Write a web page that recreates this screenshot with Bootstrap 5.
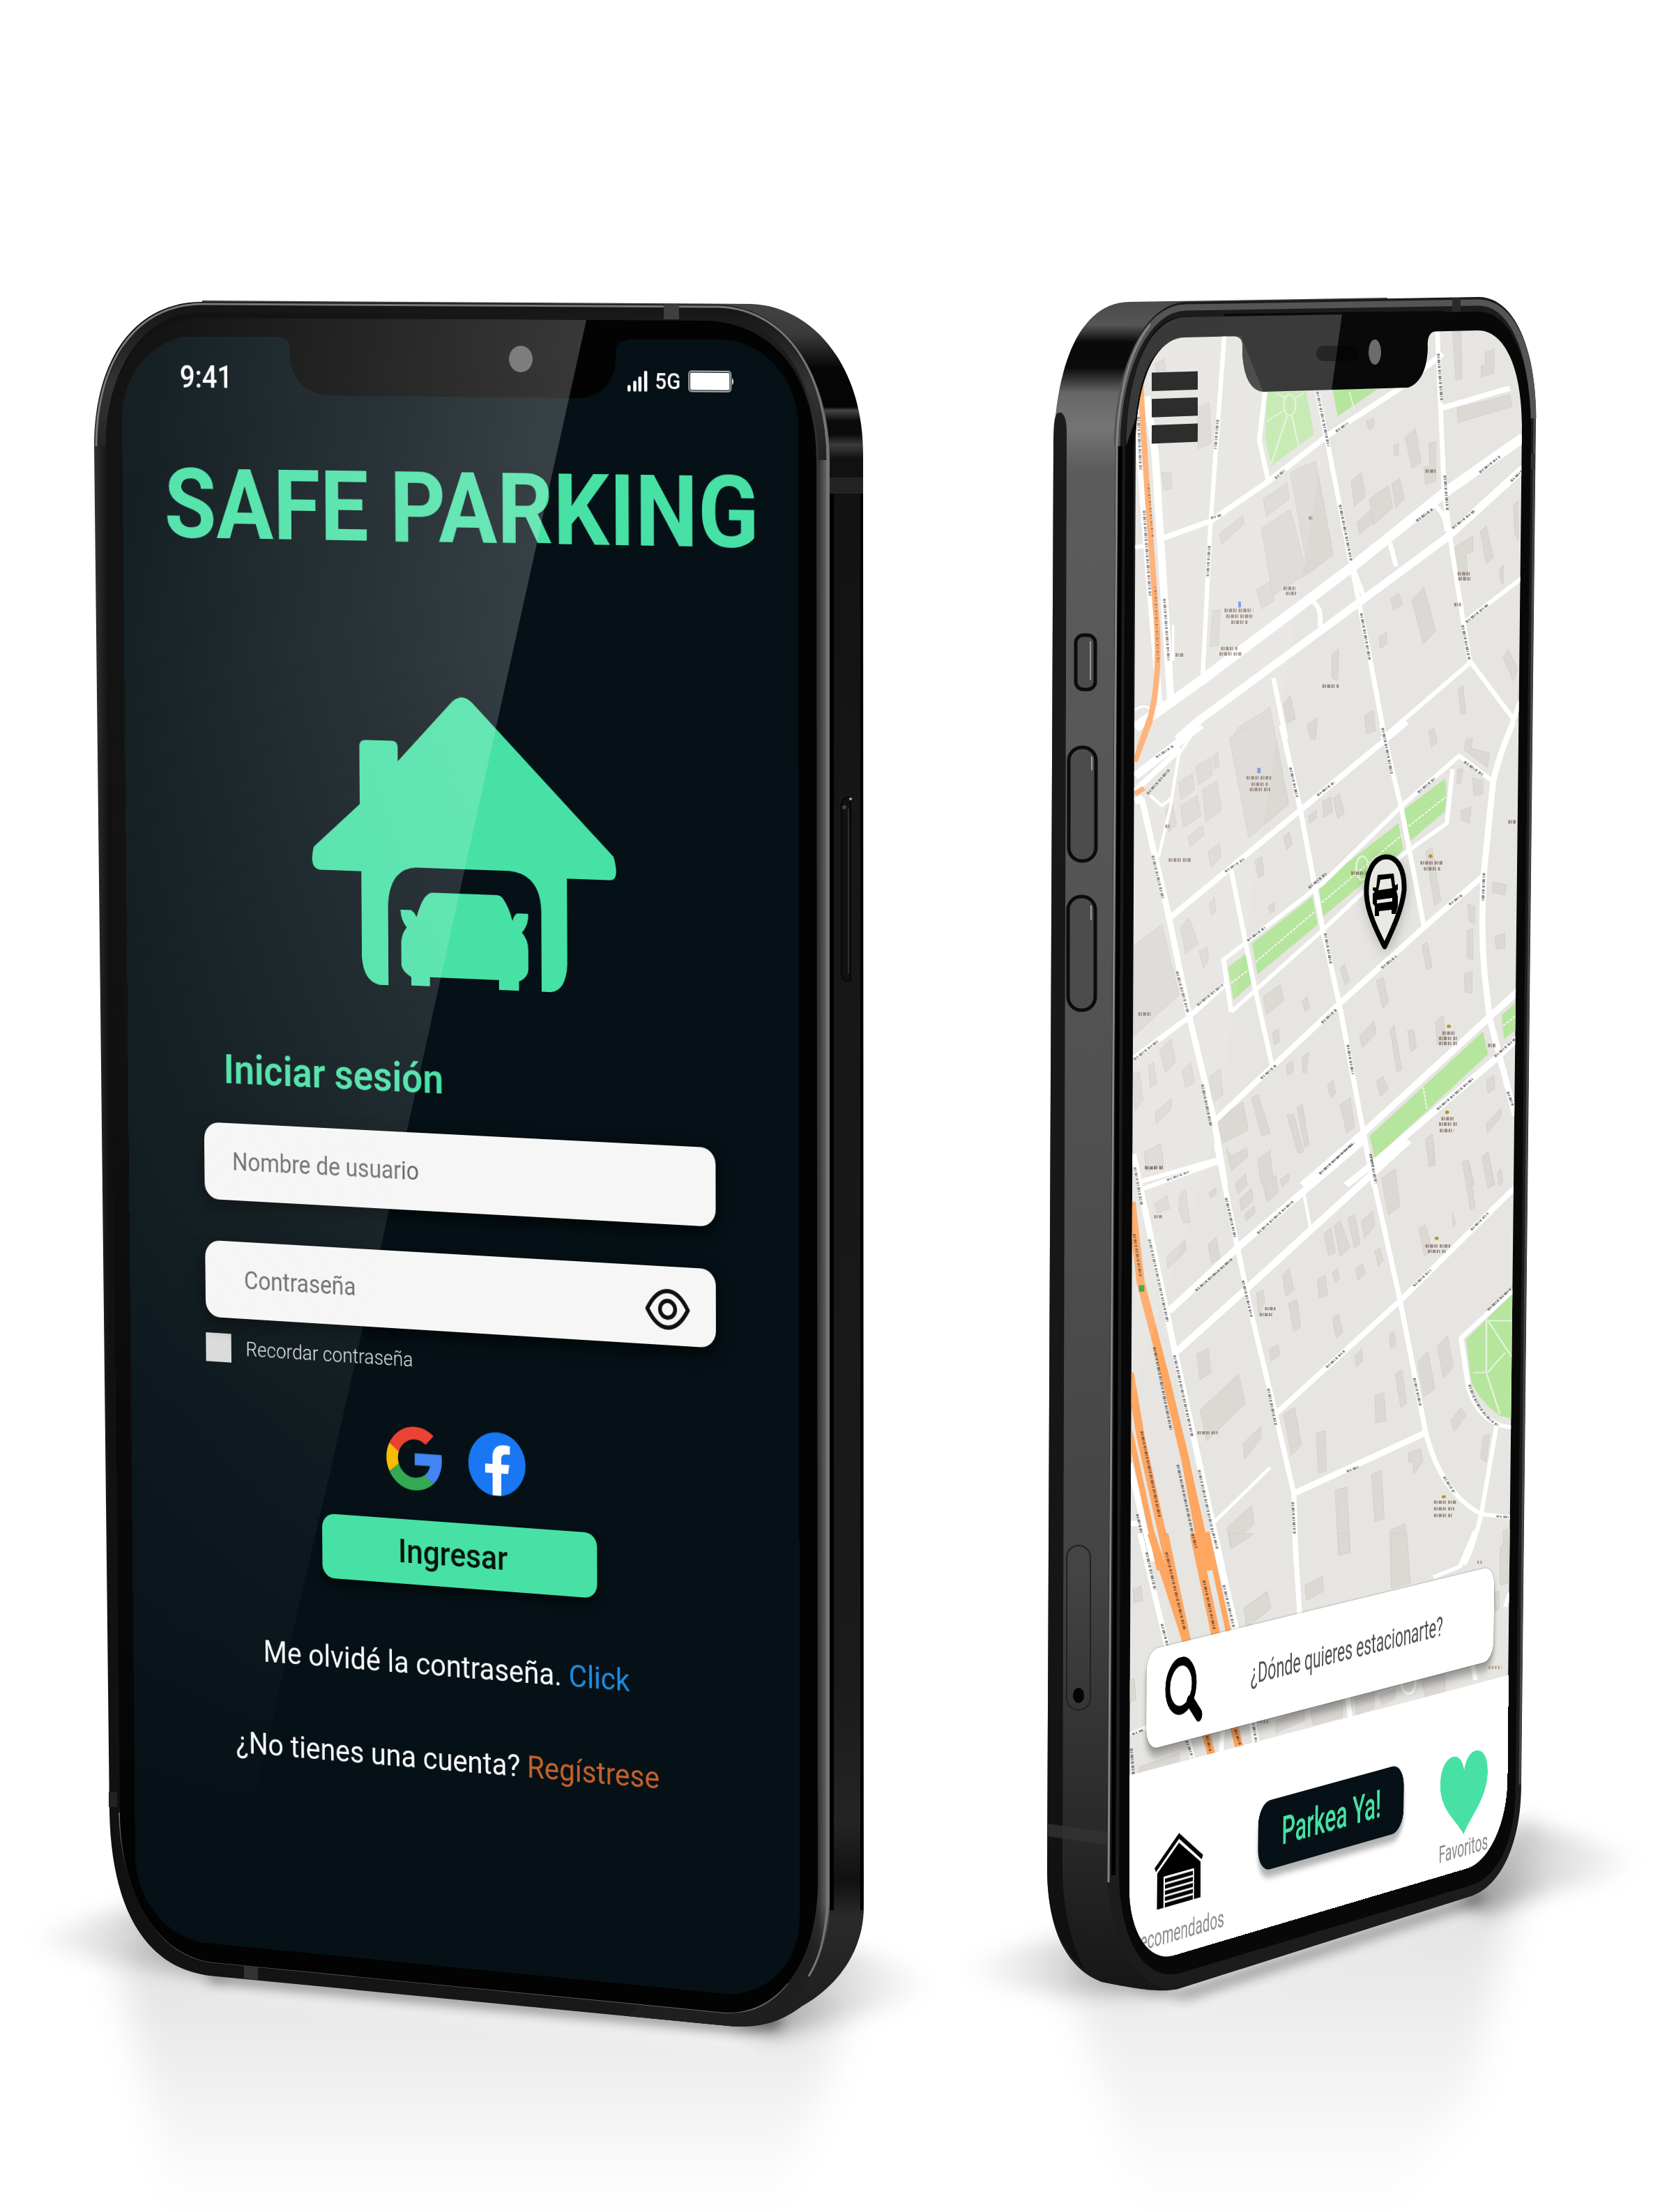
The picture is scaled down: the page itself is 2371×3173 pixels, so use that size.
<!DOCTYPE html>
<html lang="es">
<head>
<meta charset="utf-8">
<meta name="viewport" content="width=device-width, initial-scale=1">
<title>Safe Parking</title>
<link href="https://cdn.jsdelivr.net/npm/bootstrap@5.3.0/dist/css/bootstrap.min.css" rel="stylesheet">
<style>
  :root { --sp-green: #47e1a5; --sp-ink: #051116; }
  body { font-family: Roboto, "Liberation Sans", sans-serif; background: #fff; }
  .stage { aspect-ratio: 2371 / 3173; }
  .scene, .gloss { inset: 0; }
  .gloss { pointer-events: none; }
  /* logical phone display; the script tilts it onto its device */
  .display { top: 0; left: 0; width: 1080px; height: 2340px; border-radius: 120px; transform-origin: 0 0; }
  .display-login { background: var(--sp-ink); color: #fff; }

  .status-bar { height: 116px; padding: 0 98px 0 96px; font-size: 44px; font-weight: 500; }
  .status-net { font-size: 32px; gap: 12px; }
  .brand-title { margin: 55px 0 0 8px; font-size: 139px; line-height: 140px; font-weight: 700; color: var(--sp-green); }
  .brand-logo { margin-top: 196px; height: 415px; }
  .login-form { padding: 0 130px 0 126px; margin-top: 100px; }
  .form-title { margin: 0 0 46px 33px; font-size: 60px; line-height: 64px; font-weight: 600; color: var(--sp-green); }
  .field { height: 112px; border: 0; border-radius: 24px; background: #f6f6f6; font-size: 36px; padding: 0 46px; box-shadow: 0 8px 20px 4px rgba(0,0,0,.55); }
  .field::placeholder { color: #6a6a6a; opacity: 1; }
  .field-secret { padding-left: 64px; }
  .secret-wrap { margin-top: 60px; }
  .eye-btn { top: 0; right: 41px; height: 122px; border: 0; }
  .remember { margin: 23px 0 0; gap: 24px; min-height: 42px; }
  .remember .form-check-input { width: 42px; height: 42px; margin: 0; float: none; border: 0; border-radius: 0; background-color: #dadada; }
  .remember label { font-size: 30px; line-height: 42px; font-weight: 300; color: #e6e6e6; }
  .social { margin-top: 76px; gap: 41px; padding-right: 8px; }
  .enter-btn { margin-top: 43px; width: 445px; height: 94px; border-radius: 20px; background: var(--sp-green); color: #04140f; font-size: 48px; line-height: 48px; font-weight: 500; padding: 0 18px 0 0; box-shadow: 0 8px 14px rgba(0,0,0,.5); }
  .help { padding-right: 50px; font-size: 45px; line-height: 54px; }
  .help-forgot { margin: 88px 0 0; }
  .help-join { margin: 83px 0 0; }
  .link-blue { color: #1f8de0; } .link-rust { color: #c8622a; }

  .menu-btn { margin: 48px 0 0 41px; width: 122px; gap: 11px; border: 0; }
  .menu-btn span { height: 26px; background: #161616; }
  .search-box { margin: 0 47px 30px 44px; height: 146px; border-radius: 30px; background: #fff; padding: 0 40px 0 50px; gap: 132px; box-shadow: 0 12px 14px rgba(0,0,0,.35), 0 0 3px rgba(0,0,0,.4); }
  .search-box input { border: 0; padding: 0; font-size: 42px; background: transparent; box-shadow: none; }
  .search-box input::placeholder { color: #4f4f4f; opacity: 1; }
  .tab-bar { height: 284px; background: #fff; padding: 93px 58px 0 8px; border-radius: 0 0 120px 120px; }
  .tab-link { padding-top: 11px; font-size: 36px; line-height: 44px; color: #8a8a8a; }
  .tab-left { width: 251px; }
  .park-btn { margin-left: 93px; width: 417px; height: 104px; border-radius: 34px; background: var(--sp-ink); color: var(--sp-green); font-size: 60px; line-height: 60px; font-weight: 500; box-shadow: 0 12px 10px rgba(0,0,0,.3); }
</style>
<script src="https://cdn.jsdelivr.net/npm/bootstrap@5.3.0/dist/js/bootstrap.bundle.min.js" defer></script>
</head>
<body>
<main class="stage position-relative overflow-hidden w-100">

<svg class="scene position-absolute w-100 h-100" viewBox="0 0 2371 3173" aria-hidden="true">
  <defs>
    <linearGradient id="rim" x1="0" y1="0" x2="1" y2="0"><stop offset="0" stop-color="#333"/><stop offset=".02" stop-color="#111"/><stop offset=".96" stop-color="#1c1c1c"/><stop offset=".985" stop-color="#333"/><stop offset="1" stop-color="#777"/></linearGradient>
    <linearGradient id="rimFoot" gradientUnits="userSpaceOnUse" x1="0" y1="2730" x2="0" y2="2907"><stop offset="0" stop-color="#1f1f1f" stop-opacity="0"/><stop offset=".5" stop-color="#1f1f1f"/></linearGradient>
    <linearGradient id="topRim" x1="0" y1="0" x2="0" y2="1"><stop offset="0" stop-color="#161616"/><stop offset=".5" stop-color="#333"/><stop offset="1" stop-color="#222"/></linearGradient>
    <linearGradient id="sideL" gradientUnits="userSpaceOnUse" x1="0" y1="430" x2="0" y2="2910"><stop offset="0" stop-color="#444"/><stop offset=".02" stop-color="#3a3a3a"/><stop offset=".04" stop-color="#050505"/><stop offset=".062" stop-color="#050505"/><stop offset=".064" stop-color="#444"/><stop offset=".07" stop-color="#0b0b0b"/><stop offset=".078" stop-color="#0b0b0b"/><stop offset=".084" stop-color="#3c3c3c"/><stop offset=".092" stop-color="#111"/><stop offset=".3" stop-color="#161616"/><stop offset=".8" stop-color="#1a1a1a"/><stop offset=".88" stop-color="#242424"/><stop offset=".915" stop-color="#111"/><stop offset=".935" stop-color="#2a2a2a"/><stop offset="1" stop-color="#1c1c1c"/></linearGradient>
    <linearGradient id="sideR" gradientUnits="userSpaceOnUse" x1="0" y1="430" x2="0" y2="2860"><stop offset="0" stop-color="#4a4a4a"/><stop offset=".015" stop-color="#555"/><stop offset=".025" stop-color="#0a0a0a"/><stop offset=".04" stop-color="#0a0a0a"/><stop offset=".055" stop-color="#666"/><stop offset=".075" stop-color="#757575"/><stop offset=".1" stop-color="#5c5c5c"/><stop offset=".5" stop-color="#505050"/><stop offset=".75" stop-color="#444"/><stop offset=".9" stop-color="#2a2a2a"/><stop offset="1" stop-color="#161616"/></linearGradient>
    <linearGradient id="fall" x1="0" y1="0" x2="0" y2="1"><stop offset="0" stop-color="#000" stop-opacity=".12"/><stop offset="1" stop-color="#000" stop-opacity="0"/></linearGradient>
    <filter id="soft" x="-50%" y="-50%" width="200%" height="200%"><feGaussianBlur stdDeviation="26"/></filter>
    <filter id="soft2" x="-50%" y="-50%" width="200%" height="200%"><feGaussianBlur stdDeviation="9"/></filter>
    <filter id="soft3" x="-50%" y="-50%" width="200%" height="200%"><feGaussianBlur stdDeviation="14"/></filter>
    <linearGradient id="castL" x1="1" y1="0" x2="0" y2="0"><stop offset="0" stop-color="#000" stop-opacity=".42"/><stop offset=".5" stop-color="#000" stop-opacity=".14"/><stop offset="1" stop-color="#000" stop-opacity="0"/></linearGradient>
    <linearGradient id="castR" x1="0" y1="0" x2="1" y2="0"><stop offset="0" stop-color="#000" stop-opacity=".42"/><stop offset=".5" stop-color="#000" stop-opacity=".14"/><stop offset="1" stop-color="#000" stop-opacity="0"/></linearGradient>
    <clipPath id="mapClip"><path d="M1629 640C1630 550 1655 485 1700 484L2120 474C2155 474 2182 520 2183 610L2163 2430L1620 2570Z"/></clipPath>
  </defs>

  <!-- floor shadows -->
  <path d="M165 2790L310 2835L1055 2907L1220 2860L1180 3000L1110 3173H250Z" fill="url(#fall)" filter="url(#soft)"/>
  <path d="M250 2720L170 2740L40 2775Q60 2800 160 2815L320 2838Z" fill="url(#castL)" filter="url(#soft3)"/>
  <path d="M1060 2905L1200 2790L1330 2830Q1350 2865 1250 2885L1110 2922Z" fill="url(#castR)" filter="url(#soft3)"/>
  <path d="M300 2828L1060 2900L1120 2890V2908L1060 2914L300 2842Z" fill="#000" opacity=".5" filter="url(#soft2)"/>
  <path d="M1520 2800L1690 2855L2180 2690L2110 3000L1990 3173H1640Z" fill="url(#fall)" filter="url(#soft)"/>
  <path d="M1640 2790L1510 2780L1380 2815Q1400 2850 1520 2862L1680 2858Z" fill="url(#castL)" filter="url(#soft3)"/>
  <path d="M2090 2725L2180 2610L2350 2660Q2360 2690 2240 2710L2130 2745Z" fill="url(#castR)" filter="url(#soft3)"/>
  <path d="M1620 2845L1690 2855L2120 2715L2130 2728L1700 2868Z" fill="#000" opacity=".4" filter="url(#soft2)"/>

  <!-- login phone -->
  <path fill="url(#sideL)" d="M290 431L1078 436C1170 440 1238 530 1238 650L1239 2735C1239 2800 1200 2850 1150 2878C1120 2900 1095 2908 1055 2907L310 2834Z"/>
  <path d="M1193 700V2740" stroke="#000" stroke-width="6"/>
  <path d="M1236 700V2740" stroke="#000" stroke-width="4"/>
  <path d="M1190 685H1238V708H1190Z" fill="#232323"/>
  <path fill="url(#rim)" d="M135 640C135 520 190 433 290 433L1030 437C1130 440 1190 540 1190 660V2730C1188 2830 1130 2907 1055 2907L310 2835C210 2828 160 2740 157 2600Z"/>
  <path fill="url(#rimFoot)" d="M1100 2730H1190C1188 2830 1130 2907 1055 2907L900 2892Z"/>
  <path d="M145 640C146 530 200 442 285 442L1030 447C1120 450 1180 545 1180 660" fill="none" stroke="url(#topRim)" stroke-width="12"/>
  <path d="M138 640C138 525 190 437 290 436L1030 440C1130 443 1187 540 1187 660V2730C1184 2780 1175 2810 1160 2835" fill="none" stroke="#777" stroke-width="3"/>
  <path d="M171 2600C174 2700 216 2800 300 2814L1040 2887C1085 2888 1110 2870 1130 2845" fill="none" stroke="#666" stroke-width="2"/>
  <path fill="#030303" d="M153 640C153 530 205 457 290 456L1010 460C1110 462 1170 540 1171 660L1173 2700C1173 2810 1120 2890 1040 2887L305 2815C215 2803 172 2700 172 2600Z"/>
  <path d="M952 437H974V458H952Z" fill="#3f3f3f"/><path d="M350 2820L370 2822V2840L350 2838Z" fill="#333"/><path d="M156 2570H168V2592H156Z" fill="#222"/>
  <path d="M1207 1158Q1208 1141 1220 1144V1405Q1208 1412 1207 1395Z" fill="#111" stroke="#060606" stroke-width="2"/><path d="M1217 1160V1396" stroke="#2c2c2c" stroke-width="2"/><circle cx="1220" cy="1146" r="2" fill="#aaa"/><circle cx="1211" cy="1158" r="3" fill="#444"/>

  <!-- map phone -->
  <path fill="url(#sideR)" d="M1511 640C1515 520 1550 434 1620 433L1990 427L1860 2500L1690 2853C1665 2858 1640 2855 1580 2843C1520 2820 1502 2750 1502 2680Z"/>
  <path d="M1511 640C1511 600 1513 590 1522 592Q1530 596 1530 620L1524 2680Q1524 2760 1555 2825C1515 2790 1502 2740 1502 2680Z" fill="#0e0e0e" opacity=".85"/>
  <path d="M1503 2616L1600 2630V2648L1503 2634Z" fill="#333" opacity=".8"/>
  <path fill="#1c1c1c" d="M1600 640C1602 520 1640 437 1700 433L2120 426C2168 425 2203 490 2203 600L2182 2560C2182 2640 2155 2705 2110 2720L1690 2853C1640 2862 1588 2790 1588 2680Z"/>
  <path d="M1602 640C1604 525 1645 443 1700 441L2120 434C2165 433 2198 495 2199 600" fill="none" stroke="#555" stroke-width="9"/>
  <path d="M1590 2700L1602 640C1604 560 1622 500 1650 465" fill="none" stroke="#858585" stroke-width="3"/>
  <path d="M1597 2690L1607 640" stroke="#000" stroke-width="6"/>
  <path d="M2201 600L2180 2560" stroke="#484848" stroke-width="3"/>
  <path fill="#080808" d="M1614 640C1616 540 1645 457 1695 455L2120 447C2165 447 2195 510 2196 610L2174 2560C2174 2640 2150 2695 2105 2706L1690 2831C1635 2842 1604 2770 1605 2680Z"/>
  <path d="M2083 427H2095V447H2083Z" fill="#2a2a2a"/><path d="M2196 651H2202V673H2196Z" fill="#333"/>
  <g fill="#4c4c4c" stroke="#0c0c0c" stroke-width="5"><rect x="1543" y="911" width="28" height="78" rx="11"/><rect x="1533" y="1072" width="39" height="163" rx="19"/><rect x="1532" y="1286" width="39" height="163" rx="19"/></g>
  <g fill="none" stroke="#9a9a9a" stroke-width="2"><path d="M1564 920V975M1566 1085V1105M1565 1299V1320"/></g>
  <rect x="1530" y="2217" width="34" height="236" rx="17" fill="none" stroke="#222" stroke-width="2"/><ellipse cx="1547" cy="2432" rx="8" ry="11" fill="#050505"/>

  <!-- city map -->
  <g clip-path="url(#mapClip)">
    <rect x="1600" y="460" width="600" height="2380" fill="#e6e5e1"/>
    <g transform="translate(1480 400) scale(.4847 .4209)" stroke-linejoin="round">
      <g fill="#dcd9d5" stroke="#d2cfca" stroke-width="2">
        <path d="M765 660L840 620L892 940L818 1005ZM685 750L755 695L762 750L695 810ZM680 850L765 785L815 1005L712 1080ZM555 870L625 805L628 835L562 905ZM665 1060L705 1030L718 1095L680 1125ZM365 290L390 272L398 315H368ZM385 660L412 662L415 715L390 720ZM490 440L525 420L530 560L492 580ZM535 1130L558 1128L552 1250L528 1252ZM1105 540L1135 510L1152 625L1125 645ZM1175 560L1195 555V690L1165 700L1160 640H1178ZM945 690L975 660L988 740L955 775ZM1000 750L1055 705L1068 780L1010 840ZM1065 700L1088 680L1102 750L1078 780ZM962 830L1000 790L1010 830L970 870ZM1245 180H1270L1272 340L1255 345ZM1342 250L1368 240V320L1330 335V295H1342ZM1258 440L1415 395L1420 435L1262 490ZM1252 915L1305 875V930L1285 935L1290 1010L1262 1030ZM1328 860L1345 842L1365 950L1345 970ZM1125 1095L1160 1050L1195 1200L1158 1245ZM1062 1090L1085 1070L1097 1110L1070 1130ZM1028 1220L1050 1205V1245L1030 1260ZM888 1280L908 1260L905 1370L888 1360ZM1395 1290L1410 1265L1438 1330L1425 1370ZM1262 1400L1275 1385L1285 1480L1270 1485ZM1425 770L1440 755V890L1430 870ZM610 1530L705 1460L720 1568H590ZM745 1450L765 1420L780 1500L755 1515ZM985 1490L1010 1470L1018 1540L990 1550ZM815 1520L845 1495L840 1568H825ZM990 485L1012 475V505L998 515ZM1070 570L1085 562V600L1074 605ZM1385 990L1395 975V1040L1385 1020Z"/>
      </g>
      <path fill="#c2e9ae" d="M695 385H812L835 530L708 638L690 540Z"/><path fill="#b6e59d" d="M890 375H1025L905 468Z"/>
      <g fill="none" stroke="#e8f2e0" stroke-width="4"><ellipse cx="763" cy="430" rx="18" ry="36"/><path d="M725 390L748 405M805 390L780 405M745 450L695 485M755 468L708 632M770 468L790 575M940 385L955 450"/></g>
      <g fill="none" stroke="#fff" stroke-width="14">
        <path d="M305 400L345 1000L378 1450" stroke-width="18"/><path d="M340 400L365 600L412 1450" stroke-width="22"/><path d="M305 915L330 910"/>
        <path d="M570 190L550 500L528 850L505 1370" stroke-width="13"/><path d="M385 885L530 825L700 690L880 530L1080 380L1215 255" stroke-width="18"/>
        <path d="M690 385L673 550L700 690"/><path d="M845 385L940 940L1000 1290L1045 1568"/><path d="M1200 180L1220 720L1240 900L1295 1300L1425 1500"/>
        <path d="M1215 440L1415 372" stroke-width="18"/><path d="M1455 540L1220 730L950 980L500 1370L305 1530" stroke-width="32"/><path d="M1455 645L1230 880L960 1110L500 1500L430 1568" stroke-width="25"/>
        <path d="M1190 770Q1225 800 1228 860M1060 900L1078 980M830 1100Q860 1120 852 1185M945 970L985 1090M1450 1020L1280 1170M1295 1310L1035 1568M715 1360L752 1568M1445 1440L1405 1568"/>
        <path d="M418 1180V1300M305 1470Q340 1440 360 1480" stroke-width="7"/>
      </g>
      <path d="M322 350C330 560 350 850 366 1120Q384 1340 352 1490L318 1600" fill="none" stroke="#ffab6b" stroke-width="17"/>
      <g fill="none" stroke="#1f1f1f" stroke-width="8" stroke-dasharray="8 3 4 5 12 3 3 4 7 6" opacity=".5">
        <path d="M550 480L543 580M525 910L520 1020M315 470L322 650M332 790L350 1080M392 1090L405 1300M845 385L878 570M912 770L945 960M975 1140L1000 1300M1203 255L1213 420M1222 670L1230 790M1275 1180L1295 1300M1035 1530L1042 1568M720 680L750 650M900 520L935 492M1138 825L1185 785M1245 850L1310 790M1325 660L1385 605M1418 690L1450 655M1285 1170L1350 1110M530 815L560 805"/>
      </g>
      <path d="M345 700L358 880M365 1050L374 1310" fill="none" stroke="#8a5a2c" stroke-width="7" stroke-dasharray="3 8 7 5" opacity=".6"/>
      <g stroke="#6b4f45" stroke-width="12" stroke-dasharray="6 2 3 3 9 3 5 2 3 6" opacity=".6"><path d="M570 1130H655M575 1150H655M590 1170H640M560 1260H610M555 1278H620M745 1055H780M752 1072H782M1260 1005H1302M1262 1022H1300M1165 655H1195M1250 1110H1270M860 1388H908M425 1282H450M820 815H830"/></g>
      <path d="M611 1100H619V1120H611Z" fill="#7f8fe0"/>
    </g>
    <g transform="translate(1480 1040) scale(.4847 .4209)" stroke-linejoin="round">
      <g fill="#dcd9d5" stroke="#d2cfca" stroke-width="2">
        <path d="M585 45L708 -40L760 270L642 385ZM435 195L475 165L482 220L442 255ZM485 140L530 110L535 170L492 205ZM440 275L490 240L500 310L448 350ZM505 220L548 190L562 290L515 330ZM462 380L505 342L510 375L468 415ZM522 430L555 405L560 450L530 485ZM535 110L550 90L555 140L540 150ZM395 290L415 260L428 340L405 365ZM818 310L842 290V318L822 335ZM860 260L885 245L890 295L865 315ZM892 250L910 235L925 300L905 320ZM745 380L762 365L770 405L755 425ZM1175 20L1190 10L1200 60L1182 75ZM1285 50L1305 45L1300 80L1355 95L1348 145L1280 85ZM1260 150L1275 150L1270 200H1258ZM1305 180L1335 190V235L1308 240ZM1270 290L1300 280L1295 335L1272 325ZM1165 430L1185 420L1210 600L1192 615ZM1290 610L1312 620L1310 680L1295 670ZM1288 700L1305 695V800L1288 795ZM1365 535L1405 545L1400 580L1362 570ZM1370 720L1400 710V760L1375 765ZM1280 850L1303 840V915L1282 910ZM1020 870L1040 860L1055 945L1038 965ZM1155 750L1170 740L1185 825L1168 835ZM970 1060L1012 1010L1020 1050L978 1098ZM1060 1035L1072 1025L1095 1175L1080 1180ZM1112 1040L1130 1040L1138 1100L1122 1115ZM1195 1010L1218 990L1225 1080L1200 1090ZM1020 1215L1038 1195L1055 1240L1032 1265ZM1345 1210L1368 1195L1370 1240L1350 1255ZM1345 1360L1388 1305L1390 1335L1348 1390ZM1165 1410L1185 1395L1195 1500L1175 1505ZM685 925L735 885L745 940L695 985ZM712 1050L730 1035L733 1080L718 1090ZM440 690L465 655L492 745L455 780ZM495 770L520 755L522 800L508 830ZM525 610L540 585L545 635L532 650ZM660 460L680 450L688 510L670 520ZM700 620L718 605V635L705 640ZM302 750L385 680L435 920L302 1060ZM345 1160L360 1150L370 1220L350 1235ZM378 1110L412 1070L425 1150L395 1185ZM445 1180L470 1150L482 1220L455 1235ZM300 1190L318 1180L330 1280L305 1315ZM525 1200L558 1170L565 1260L535 1290ZM365 1320L415 1270L412 1310L368 1360ZM550 1345L625 1285L640 1380L565 1425ZM650 1270L670 1260L705 1390L680 1400ZM755 1330L775 1325L805 1455L788 1460ZM785 1305L800 1290L820 1430L808 1440ZM912 1295L942 1270L955 1370L932 1390ZM800 1130L820 1115L812 1185H802ZM752 1160L770 1145L775 1180L757 1195ZM875 1230L890 1210L900 1255L885 1270ZM332 1460L380 1425L390 1500L340 1520ZM575 1440L590 1470L635 1440L640 1470L590 1520ZM668 1480L705 1450L715 1568H680ZM1275 1490L1292 1482L1310 1568H1290ZM1335 1470L1350 1458L1370 1568H1350ZM912 830L925 815L940 870L928 888ZM800 940L815 925L822 965L808 975Z"/>
      </g>
      <path fill="#b6e59d" d="M580 825L635 778L650 882L597 937ZM652 745L830 585L846 680L668 850ZM848 545L1085 335L1100 425L862 652ZM1100 290L1222 183Q1232 240 1222 295L1120 395ZM1000 1400L1335 1045L1350 1122L1015 1478ZM1390 990L1435 943V1036L1397 1070Z"/>
      <path d="M590 880L640 835M662 808L838 635M858 605L1095 375M1115 345L1225 245M1158 1235L1170 1312M1395 1025L1432 990" fill="none" stroke="#eef5e8" stroke-width="5" stroke-dasharray="9 4"/>
      <ellipse cx="978" cy="487" rx="18" ry="40" fill="none" stroke="#e4f2da" stroke-width="6"/>
      <g fill="none" stroke="#fff" stroke-width="14">
        <path d="M738 0L795 290L860 690L910 950L980 1380L1012 1568" stroke-width="15"/><path d="M1035 0L1095 290L1162 695"/><path d="M1110 -10L795 290L400 665" stroke-width="18"/>
        <path d="M500 0L305 175" stroke-width="26"/><path d="M440 80L305 225" stroke-width="18"/><path d="M325 250L405 650L465 990L540 1350L572 1568" stroke-width="18"/><path d="M305 260L330 250" stroke-width="24"/>
        <path d="M470 40L435 100L410 280L375 450M350 240L385 275L412 250" stroke-width="9"/><path d="M590 495L655 870L712 1165"/>
        <path d="M590 978L567 800L860 540L1100 270L1265 105L1368 195"/><path d="M590 978L860 700L1100 440L1228 335L1245 150" stroke-width="13"/>
        <path d="M302 1135L460 1000L570 885" stroke-width="17"/><path d="M540 1350L910 950L1160 690L1340 510" stroke-width="18"/>
        <path d="M1425 -10Q1380 110 1365 195L1338 500Q1328 700 1340 850L1355 1000L1430 1330" stroke-width="18"/>
        <path d="M1440 905L1350 1000L985 1385L800 1568" stroke-width="21"/><path d="M1440 1065L1370 1140L1010 1495L930 1568" stroke-width="21"/>
        <path d="M310 1560L552 1480" stroke-width="15"/>
      </g>
      <path d="M352 -20L305 125M305 235L332 215" stroke="#ffab6b" stroke-width="16"/>
      <g fill="none" stroke="#1f1f1f" stroke-width="8" stroke-dasharray="8 3 4 5 12 3 3 4 7 6" opacity=".5">
        <path d="M368 110L420 70M342 235L408 150M358 445L388 590M430 840L462 980M505 1225L530 1365M765 145L785 245M868 710L885 815M935 1090L950 1190M1038 10L1065 165M1003 1470L1018 1568M845 240L895 195M572 500L630 455M820 555L872 505M638 735L690 690M490 955L565 885M303 1140L375 1075M678 1205L722 1160M858 1015L900 970M1035 828L1078 788M1235 612L1275 578M1143 230L1192 182M1280 125L1335 170M1370 1130L1430 1070M1200 1310L1305 1205M852 1530L955 1425M400 1552L470 1520M1338 505L1335 600M1408 1250L1425 1300"/>
      </g>
      <g stroke="#6b4f45" stroke-width="12" stroke-dasharray="6 2 3 3 9 3 5 2 3 6" opacity=".6"><path d="M635 180H710M650 202H700M645 220H705M405 460H470M1150 470H1218M1160 490H1210M1215 1050H1255M1205 1068H1258M1205 1085H1260M1212 1342H1248M1205 1360H1258M1207 1382H1250M315 985H355M335 1508H390M945 505H990M1410 330H1432M395 345H410M1350 1092H1372"/></g>
      <g fill="#b59a1c"><circle cx="1180" cy="447" r="6"/><circle cx="1234" cy="1027" r="6"/><circle cx="1229" cy="1320" r="6"/></g><rect x="667" y="146" width="10" height="18" fill="#7f8fe0"/>
    </g>
    <g transform="translate(1480 1640) scale(.4847 .3827)" stroke-linejoin="round">
      <g fill="#dcd9d5" stroke="#d2cfca" stroke-width="2">
        <path d="M602 150L632 115L638 155L610 190ZM685 160L722 120L730 185L695 220ZM735 135L760 115L762 135L742 165ZM615 210L650 170L655 215L620 255ZM630 265L658 235L660 260L635 292ZM362 225L400 195L408 245L372 262ZM438 190L455 172L467 295L448 300L435 250ZM400 425L452 362L458 400L402 470ZM522 380L545 352L557 430L532 450ZM525 185L545 165V190L530 205ZM742 495L762 465L775 550L752 575ZM845 510L868 495L875 570L850 582ZM865 340L885 315L898 410L878 420ZM895 310L912 290L942 390L912 425ZM935 280L955 265L972 375L955 392ZM975 290L1008 255L1015 310L985 355ZM890 485L902 470L912 505L898 522ZM958 470L980 450L987 490L965 515ZM1015 405L1030 392L1040 440L1025 460ZM760 600L785 585L795 690L775 705ZM665 560L685 550L690 590L672 650ZM890 655L908 640L920 710L900 728ZM702 775L728 755L735 790L708 818ZM488 790L522 770L530 860L498 885ZM498 1000L612 865L632 975L518 1115ZM625 1125L678 1060V1105L630 1185ZM745 1015L778 990L798 1130L768 1170ZM842 1085L868 1078L872 1230L848 1235ZM1015 945L1042 935L1048 1040L1018 1048ZM1075 865L1095 850L1110 975L1092 990ZM1142 820L1172 780L1193 920L1160 950ZM1200 760L1230 722L1248 840L1218 880ZM1240 1040L1270 990L1285 1020L1250 1080ZM1115 1160L1150 1145L1158 1190L1130 1240L1128 1200L1115 1195ZM1335 1100L1355 1088L1345 1195L1328 1180ZM897 1300L932 1288L942 1520L908 1540ZM1005 1240L1035 1225L1043 1405L1015 1420ZM578 1440L650 1358L658 1425L588 1518ZM1060 1450L1105 1425L1112 1568H1062ZM1035 130L1075 95L1090 235L1055 270ZM1275 75L1292 65L1312 240L1298 250ZM1332 55L1350 30L1368 155L1350 170ZM1378 110L1388 95L1395 145L1382 160ZM1145 320L1165 305L1185 400L1162 425ZM1058 715L1072 705L1077 760L1062 770ZM955 800L975 770L980 815L960 838ZM1245 280V262L1254 300L1248 315ZM1395 1450L1415 1445V1568H1395ZM335 30L380 5L390 75L345 90ZM1165 0H1190L1185 80Z"/>
      </g>
      <path fill="#b6e59d" d="M1285 735L1425 560V1032L1385 1022Q1320 960 1300 890Z"/>
      <path d="M1345 640L1345 860L1385 1015M1425 665L1350 665L1420 800M1305 860L1350 858L1400 785" fill="none" stroke="#e4f2da" stroke-width="5"/>
      <g fill="none" stroke="#fff" stroke-width="15">
        <path d="M300 40L400 640L425 790L565 1600" stroke-width="18"/><path d="M330 170L552 70" stroke-width="16"/><path d="M545 0L610 400L650 640L720 1010L775 1310L782 1568"/>
        <path d="M985 -15L610 390L405 630" stroke-width="23"/><path d="M1115 -10L640 540L425 785" stroke-width="23"/>
        <path d="M985 -10L1090 590L1165 1080Q1210 1310 1330 1390L1418 1402"/><path d="M1430 165L1090 590L725 1010" stroke-width="18"/><path d="M1165 1085L780 1310" stroke-width="22"/>
        <path d="M1425 550L1270 730L1293 920Q1330 1060 1425 1065" stroke-width="15"/><path d="M1375 1060L1330 1390Q1310 1500 1280 1580" stroke-width="13"/>
        <path d="M540 1420L705 1215" stroke-width="11"/><path d="M805 190L825 320" stroke-width="9"/><path d="M290 1200L355 1568" stroke-width="17"/><path d="M293 1425H318" stroke-width="20"/>
      </g>
      <g fill="none" stroke="#ffa661"><path d="M295 220L322 520L400 900L455 1190L515 1600" stroke-width="24"/><path d="M390 850L445 1120L530 1600" stroke-width="18"/><path d="M290 860L322 1100L410 1600" stroke-width="24"/><path d="M290 1080L378 1600" stroke-width="17"/></g>
      <g fill="none" stroke="#1f1f1f" stroke-width="8" stroke-dasharray="8 3 4 5 12 3 3 4 7 6" opacity=".5">
        <path d="M305 90L325 230M348 360L402 670M422 795L475 1100M495 1225L548 1530M312 1390L345 1568M575 205L602 355M625 515L650 650M700 920L722 1055M772 1345L778 1475M1002 40L1018 150M1132 880L1150 985M1220 1250L1250 1310M400 138L468 105M668 338L775 215M852 115L950 0M485 552L595 430M872 840L925 778M1130 535L1180 475M1300 325L1350 262M1350 625L1422 540M932 1230L968 1212M1295 905Q1320 1010 1380 1058M1375 1398L1412 1402"/>
        <path d="M303 340L322 500M362 765L412 1075M325 1080L378 1400M432 1205L485 1520"/>
      </g>
      <g stroke="#6b4f45" stroke-width="12" stroke-dasharray="6 2 3 3 9 3 5 2 3 6" opacity=".6"><path d="M335 92H390M362 275H388M690 620H722M675 642H715M1165 385H1238M1172 405H1225M490 1085H550M1190 1345H1255M1190 1370H1250M1190 1395H1245"/></g>
      <g fill="#b59a1c"><circle cx="1198" cy="356" r="6"/><circle cx="1219" cy="1325" r="6"/></g><rect x="317" y="532" width="16" height="24" fill="#3a9b3f"/>
    </g>
    <g transform="translate(1480 2200) scale(.5485 .4464)" stroke-linejoin="round">
      <g fill="#dcd9d5" stroke="#d2cfca" stroke-width="2"><path d="M517 0H580L522 48ZM800 0H828L832 60L804 70ZM938 0H980L990 160L940 175ZM715 165L760 138L762 185L718 215ZM555 240L615 185L625 240L562 300ZM265 180L285 168L290 215L268 222ZM255 470L268 465L272 535L257 540ZM640 600L712 560V600L638 640ZM730 570L812 530V590L735 615ZM845 530L895 510V560L850 580ZM910 520L950 500V530L915 550ZM1020 470L1080 450V510L1030 530ZM1225 45L1245 20V160L1225 165ZM280 750L385 705V735L280 770ZM1210 190L1222 185V240L1212 250Z"/></g>
      <g fill="none" stroke="#fff"><path d="M283 0L355 370L422 730" stroke-width="14"/><path d="M475 0L532 300L588 680" stroke-width="18"/><path d="M687 0L701 270M824 510L834 600" stroke-width="13"/><path d="M1160 -10L1120 105L1050 140M1250 190L1238 235M1150 400L1160 470M258 645L300 622M500 610L495 700" stroke-width="12"/><ellipse cx="985" cy="480" rx="18" ry="34" stroke-width="6"/></g>
      <g fill="none" stroke="#ffa661"><path d="M312 0L405 350" stroke-width="20"/><path d="M345 0L405 350M425 0L482 330" stroke-width="24"/><path d="M458 -5L515 320" stroke-width="14"/><path d="M450 620L472 720M525 600L545 700" stroke-width="22"/></g>
      <path d="M300 60L322 180M340 290L355 360M352 60L400 310M420 0L430 45M450 150L478 310M475 0L485 50M502 165L528 300M405 665L420 720M578 600L588 680M532 630L545 680M458 650L468 705M262 645L292 630M260 690L266 775" fill="none" stroke="#1f1f1f" stroke-width="7" stroke-dasharray="8 3 4 5 12 3 3 4 7 6" opacity=".5"/>
      <path d="M1195 430H1228M590 605H622M1165 92H1180" stroke="#8a6a4f" stroke-width="10" stroke-dasharray="4 4" opacity=".6"/>
    </g>
    <!-- car pin -->
    <path d="M1988 1369C1975 1345 1962 1315 1960 1285C1958 1252 1970 1232 1989 1230C2008 1230 2018 1252 2015 1285C2012 1312 2000 1345 1988 1369Z" fill="#000" opacity=".25" filter="url(#soft2)"/>
    <path d="M1986 1358C1974 1334 1961 1307 1960 1283C1959 1252 1970 1230 1988 1229C2006 1229 2015 1250 2014 1277C2011 1305 1998 1332 1986 1358Z" fill="#e9e8e5" stroke="#000" stroke-width="7" stroke-linejoin="round"/>
    <path fill="#000" fill-rule="evenodd" d="M1976 1255L1999 1253L2001 1270L2005 1268V1276L2003 1278L2005 1286V1300L2002 1311H1996V1305L1978 1307V1314H1972V1300L1969 1296V1282L1972 1279L1969 1277V1273L1974 1273ZM1980 1262L1977 1277L1997 1274L1995 1260ZM1975 1291V1296L1997 1293V1288Z"/>
  </g>
</svg>

<section class="display display-login position-absolute overflow-hidden d-flex flex-column" data-quad="174,482 1145,488 1147,2870 195,2777" aria-label="Safe Parking">
  <header class="status-bar d-flex align-items-center justify-content-between flex-shrink-0">
    <span>9:41</span>
    <span class="status-net d-flex align-items-center">
      <svg width="31" height="29" viewBox="0 0 31 29" fill="#fff"><rect y="20" width="5" height="9" rx="2"/><rect x="9" y="14" width="5" height="15" rx="2"/><rect x="17" y="8" width="5" height="21" rx="2"/><rect x="26" width="5" height="29" rx="2"/></svg>
      <span>5G</span>
      <svg width="72" height="30" viewBox="0 0 72 30"><rect x="1" y="1" width="65" height="28" rx="4" fill="none" stroke="#aab0b5" stroke-width="2"/><rect x="3" y="3" width="61" height="24" rx="2" fill="#fff"/><path d="M68 10q4 5 0 10z" fill="#fff"/></svg>
    </span>
  </header>
  <h1 class="brand-title text-center text-nowrap">SAFE PARKING</h1>
  <svg class="brand-logo align-self-center flex-shrink-0" viewBox="-22 0 510 415" fill="#47e1a5" role="img" aria-label="Garaje">
    <path d="M228 7Q243 -6 259 7L484 220Q494 253 478 253H410V375Q408 412 384 415H369V300Q367 248 318 245H168Q126 248 123 300V415H108Q82 410 80 375V253H12Q-6 250 3 220L78 157V75Q78 65 87 65H131Q140 65 140 75V94Z"/>
    <path d="M143 306H160Q165 308 169 316Q177 290 186 284Q190 280 196 280H298Q305 280 309 286Q318 298 323 316Q326 306 331 305H348V312Q346 324 338 332Q348 342 348 356V385Q347 396 333 402V415H301V401H190V414H160V402Q145 394 144 385V352Q145 340 153 331Q144 322 143 306Z"/>
  </svg>
  <form class="login-form d-flex flex-column" onsubmit="return false">
    <h2 class="form-title">Iniciar sesión</h2>
    <input class="form-control field" type="text" placeholder="Nombre de usuario" aria-label="Nombre de usuario">
    <div class="secret-wrap position-relative">
      <input class="form-control field field-secret" type="password" placeholder="Contraseña" aria-label="Contraseña">
      <button class="eye-btn btn p-0 position-absolute d-flex align-items-center" type="button" aria-label="Contraseña">
        <svg width="70" height="58" viewBox="0 0 70 58" fill="none" stroke="#111" stroke-width="6"><path d="M3 29Q17 3 35 3T67 29Q53 55 35 55T3 29Z"/><circle cx="35" cy="29" r="12"/></svg>
      </button>
    </div>
    <div class="remember form-check d-flex align-items-center p-0">
      <input class="form-check-input" type="checkbox" id="keep"><label for="keep">Recordar contraseña</label>
    </div>
    <div class="social d-flex justify-content-center">
      <a href="#" aria-label="Google"><svg class="d-block" width="92" height="92" viewBox="0 0 48 48"><path fill="#EA4335" d="M24 9.500c3.540 0 6.710 1.220 9.210 3.600l6.850-6.850C35.900 2.380 30.470 0 24 0 14.620 0 6.510 5.380 2.560 13.220l7.980 6.190C12.430 13.720 17.740 9.500 24 9.500z"/><path fill="#4285F4" d="M46.980 24.550c0-1.570-.15-3.090-.38-4.550H24v9.020h12.940c-.58 2.960-2.260 5.480-4.780 7.180l7.730 6c4.510-4.180 7.090-10.360 7.090-17.650z"/><path fill="#FBBC05" d="M10.530 28.590c-.48-1.450-.76-2.990-.76-4.590s.27-3.140.76-4.590l-7.980-6.190C.92 16.460 0 20.120 0 24c0 3.880.92 7.540 2.560 10.780l7.970-6.190z"/><path fill="#34A853" d="M24 48c6.480 0 11.930-2.130 15.890-5.810l-7.730-6c-2.150 1.450-4.920 2.300-8.160 2.300-6.260 0-11.570-4.220-13.470-9.910l-7.980 6.190C6.510 42.620 14.620 48 24 48z"/></svg></a>
      <a href="#" aria-label="Facebook"><svg class="d-block" width="92" height="92" viewBox="0 0 92 92"><circle cx="46" cy="46" r="46" fill="#1977f3"/><path fill="#fff" d="M39 91V59H27V46H39V36C39 24 46 18 57 18Q63 18 67 19V31H61C55 31 53 34 53 39V46H66L64 59H53V91Z"/></svg></a>
    </div>
    <button class="enter-btn btn border-0 align-self-center" type="submit">Ingresar</button>
  </form>
  <div class="help text-center text-nowrap">
    <p class="help-forgot">Me olvidé la contraseña. <a class="link-blue text-decoration-none" href="#">Click</a></p>
    <p class="help-join">¿No tienes una cuenta? <a class="link-rust text-decoration-none" href="#">Regístrese</a></p>
  </div>
</section>

<section class="display position-absolute overflow-hidden d-flex flex-column" data-quad="1630,486 2184,473 2161,2663 1619,2824" aria-label="Mapa">
  <button class="menu-btn btn p-0 d-flex flex-column align-items-stretch" type="button" aria-label="Menu"><span></span><span></span><span></span></button>
  <div class="search-box mt-auto d-flex align-items-center">
    <svg class="flex-shrink-0" width="102" height="102" viewBox="0 0 102 102" fill="none" stroke="#000" stroke-linecap="round"><circle cx="43" cy="42" r="36" stroke-width="13"/><path d="M68 68L92 92" stroke-width="19"/></svg>
    <input class="form-control" type="search" placeholder="¿Dónde quieres estacionarte?" aria-label="¿Dónde quieres estacionarte?">
  </div>
  <nav class="tab-bar d-flex align-items-start">
    <a class="tab-link tab-left d-flex flex-column align-items-center text-decoration-none" href="#">
      <svg width="134" height="125" viewBox="0 0 134 125"><path d="M3 46L67 5L131 46" fill="none" stroke="#000" stroke-width="7"/><path d="M8 52L67 15L126 52V105H108V59H26V105H8Z"/><path d="M29 62H105V105H29Z"/><path d="M27 106V61H107V106M29 70H105M29 79H105M29 88H105M29 97H105" fill="none" stroke="#fff" stroke-width="3"/></svg>
      <span>Recomendados</span>
    </a>
    <button class="park-btn btn border-0 p-0 text-nowrap flex-shrink-0" type="button">Parkea Ya!</button>
    <a class="tab-link ms-auto d-flex flex-column align-items-center text-decoration-none" href="#">
      <svg width="142" height="125" viewBox="0 0 142 125" fill="#47e1a5"><path d="M71 125C50 100 0 78 0 38C0 12 18 0 37 0C54 0 67 10 71 26C75 10 88 0 105 0C124 0 142 12 142 38C142 78 92 100 71 125Z"/></svg>
      <span>Favoritos</span>
    </a>
  </nav>
</section>

<svg class="gloss position-absolute w-100 h-100" viewBox="0 0 2371 3173" aria-hidden="true">
  <defs>
    <linearGradient id="glareX" gradientUnits="userSpaceOnUse" x1="160" y1="900" x2="790" y2="1000"><stop offset="0" stop-color="#fff" stop-opacity=".07"/><stop offset="1" stop-color="#fff" stop-opacity=".22"/></linearGradient>
    <linearGradient id="fadeY" gradientUnits="userSpaceOnUse" x1="0" y1="460" x2="0" y2="2850"><stop offset="0" stop-color="#fff"/><stop offset=".2" stop-color="#eee"/><stop offset=".45" stop-color="#999"/><stop offset=".66" stop-color="#444"/><stop offset=".9" stop-color="#0a0a0a"/><stop offset="1" stop-color="#000"/></linearGradient>
    <mask id="fadeMask"><rect width="2371" height="3173" fill="url(#fadeY)"/></mask>
  </defs>
  <path fill="#030303" d="M380 460L395 483Q414 483 416 500V515Q422 562 469 567L834 571Q880 566 884 512V500Q886 488 902 488L930 462Z"/>
  <ellipse cx="747" cy="515" rx="17" ry="19" fill="#5e5e5e"/>
  <path mask="url(#fadeMask)" fill="url(#glareX)" d="M153 640C153 530 205 457 290 456L841 459L730 960L593 1580L490 2040L310 2815C215 2803 172 2700 172 2600Z"/>
  <path fill="#090909" d="M1755 450L1764 482Q1782 481 1782 495V510Q1786 560 1812 562L2020 556Q2046 546 2048 500Q2046 476 2060 475L2070 446Z"/>
  <path fill="#fff" opacity=".2" d="M1700 455L1925 451L1910 560L1812 562Q1786 560 1782 510V495Q1782 481 1764 482L1700 484Q1640 490 1629 600L1615 640C1616 540 1645 457 1700 455Z"/>
  <rect x="1888" y="496" width="60" height="22" rx="11" fill="#000" opacity=".35"/>
  <ellipse cx="1972" cy="505" rx="9" ry="18" fill="#6c6c6c"/>
  <path fill="#fff" opacity=".1" d="M1690 484L1780 482L1812 562L1910 560L1740 1640L1626 2000V640Q1640 500 1690 484Z"/>
</svg>
</main>
<script>
  /* Project each 1080x2340 display onto the four corners of its device. */
  function place() {
    var k = document.querySelector('.stage').clientWidth / 2371;
    document.querySelectorAll('.display').forEach(function (el) {
      var p = el.dataset.quad.split(' ').map(function (c) { return c.split(',').map(function (n) { return n * k; }); });
      var W = el.offsetWidth, H = el.offsetHeight;
      var x1 = p[1][0] - p[2][0], x2 = p[3][0] - p[2][0], sx = p[0][0] - p[1][0] + p[2][0] - p[3][0];
      var y1 = p[1][1] - p[2][1], y2 = p[3][1] - p[2][1], sy = p[0][1] - p[1][1] + p[2][1] - p[3][1];
      var d = x1 * y2 - x2 * y1, g = (sx * y2 - x2 * sy) / d, h = (x1 * sy - sx * y1) / d;
      el.style.transform = 'matrix3d(' + [
        (p[1][0] - p[0][0] + g * p[1][0]) / W, (p[1][1] - p[0][1] + g * p[1][1]) / W, 0, g / W,
        (p[3][0] - p[0][0] + h * p[3][0]) / H, (p[3][1] - p[0][1] + h * p[3][1]) / H, 0, h / H,
        0, 0, 1, 0, p[0][0], p[0][1], 0, 1].join(',') + ')';
    });
  }
  place();
  window.addEventListener('resize', place);
</script>
</body>
</html>
